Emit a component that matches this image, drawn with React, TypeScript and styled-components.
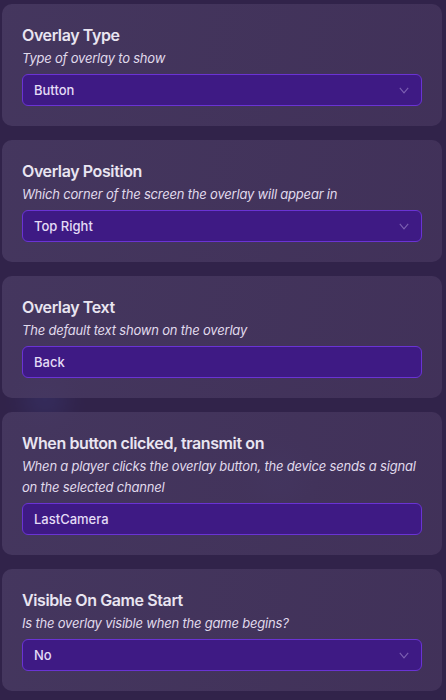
import React from "react";
import styled, {createGlobalStyle} from "styled-components";

const GlobalStyle = createGlobalStyle`
    html, body {
        margin: 0;
        padding: 0;
        background: #31234a;
    }
    body {
        font-family: Inter, "Noto Sans", sans-serif;
        -webkit-font-smoothing: antialiased;
    }
`

const PAGE = styled.div`
    position: relative;
    width: 446px;
    min-height: 700px;
    box-sizing: border-box;
    padding: 4px 4px 0 2px;
    display: flex;
    flex-direction: column;
    gap: 14px;
    overflow: hidden;
    background: #31234a;
`

const BLOB = styled.div<{ $x: number; $y: number; $size: number }>`
    position: absolute;
    left: ${props => props.$x}px;
    top: ${props => props.$y}px;
    width: ${props => props.$size}px;
    height: ${props => props.$size}px;
    border-radius: 50%;
    background: #3b3a78;
    filter: blur(12px);
    opacity: 0.4;
`

const CARD = styled.section`
    position: relative;
    display: flex;
    flex-direction: column;
    padding: 20px 20px 20px 20px;
    border-radius: 10px;
    background: linear-gradient(100deg, rgba(72, 58, 98, 0.84), rgba(68, 52, 92, 0.84));
`

const TITLE = styled.h3`
    margin: 0;
    font-size: 16px;
    line-height: 22px;
    font-weight: 600;
    letter-spacing: -0.4px;
    color: #e9e5f1;
`

const DESC = styled.p`
    margin: 2px 0 5px 0;
    font-size: 13px;
    line-height: 21px;
    font-style: italic;
    letter-spacing: -0.2px;
    color: #e0daec;
`

const FIELD = styled.div`
    height: 32px;
    box-sizing: border-box;
    display: flex;
    align-items: center;
    justify-content: space-between;
    padding: 0 12px 0 11px;
    border: 1px solid #6a33d4;
    border-radius: 6px;
    background: #3e1a84;
    font-size: 13px;
    font-weight: 500;
    color: #e4dcf6;
`

const CHEVRON = styled.svg`
    width: 10px;
    height: 7px;
`

type Row = {
    title: string;
    desc: string;
    value: string;
    select: boolean;
}

const rows: Row[] = [
    {title: "Overlay Type", desc: "Type of overlay to show", value: "Button", select: true},
    {title: "Overlay Position", desc: "Which corner of the screen the overlay will appear in", value: "Top Right", select: true},
    {title: "Overlay Text", desc: "The default text shown on the overlay", value: "Back", select: false},
    {
        title: "When button clicked, transmit on",
        desc: "When a player clicks the overlay button, the device sends a signal on the selected channel",
        value: "LastCamera",
        select: false
    },
    {title: "Visible On Game Start", desc: "Is the overlay visible when the game begins?", value: "No", select: true},
]

const App = () => {
    return (
        <>
            <GlobalStyle/>
            <PAGE>
                <BLOB $x={22} $y={376} $size={46}/>
                <BLOB $x={255} $y={452} $size={50}/>
                {rows.map(row => (
                    <CARD key={row.title}>
                        <TITLE>{row.title}</TITLE>
                        <DESC>{row.desc}</DESC>
                        <FIELD>
                            <span>{row.value}</span>
                            {row.select && (
                                <CHEVRON viewBox="0 0 10 7">
                                    <path d="M0.8 0.8 L5 5.8 L9.2 0.8" fill="none" stroke="#7c60b2" strokeWidth="1.1"/>
                                </CHEVRON>
                            )}
                        </FIELD>
                    </CARD>
                ))}
            </PAGE>
        </>
    )
}

export default App;
